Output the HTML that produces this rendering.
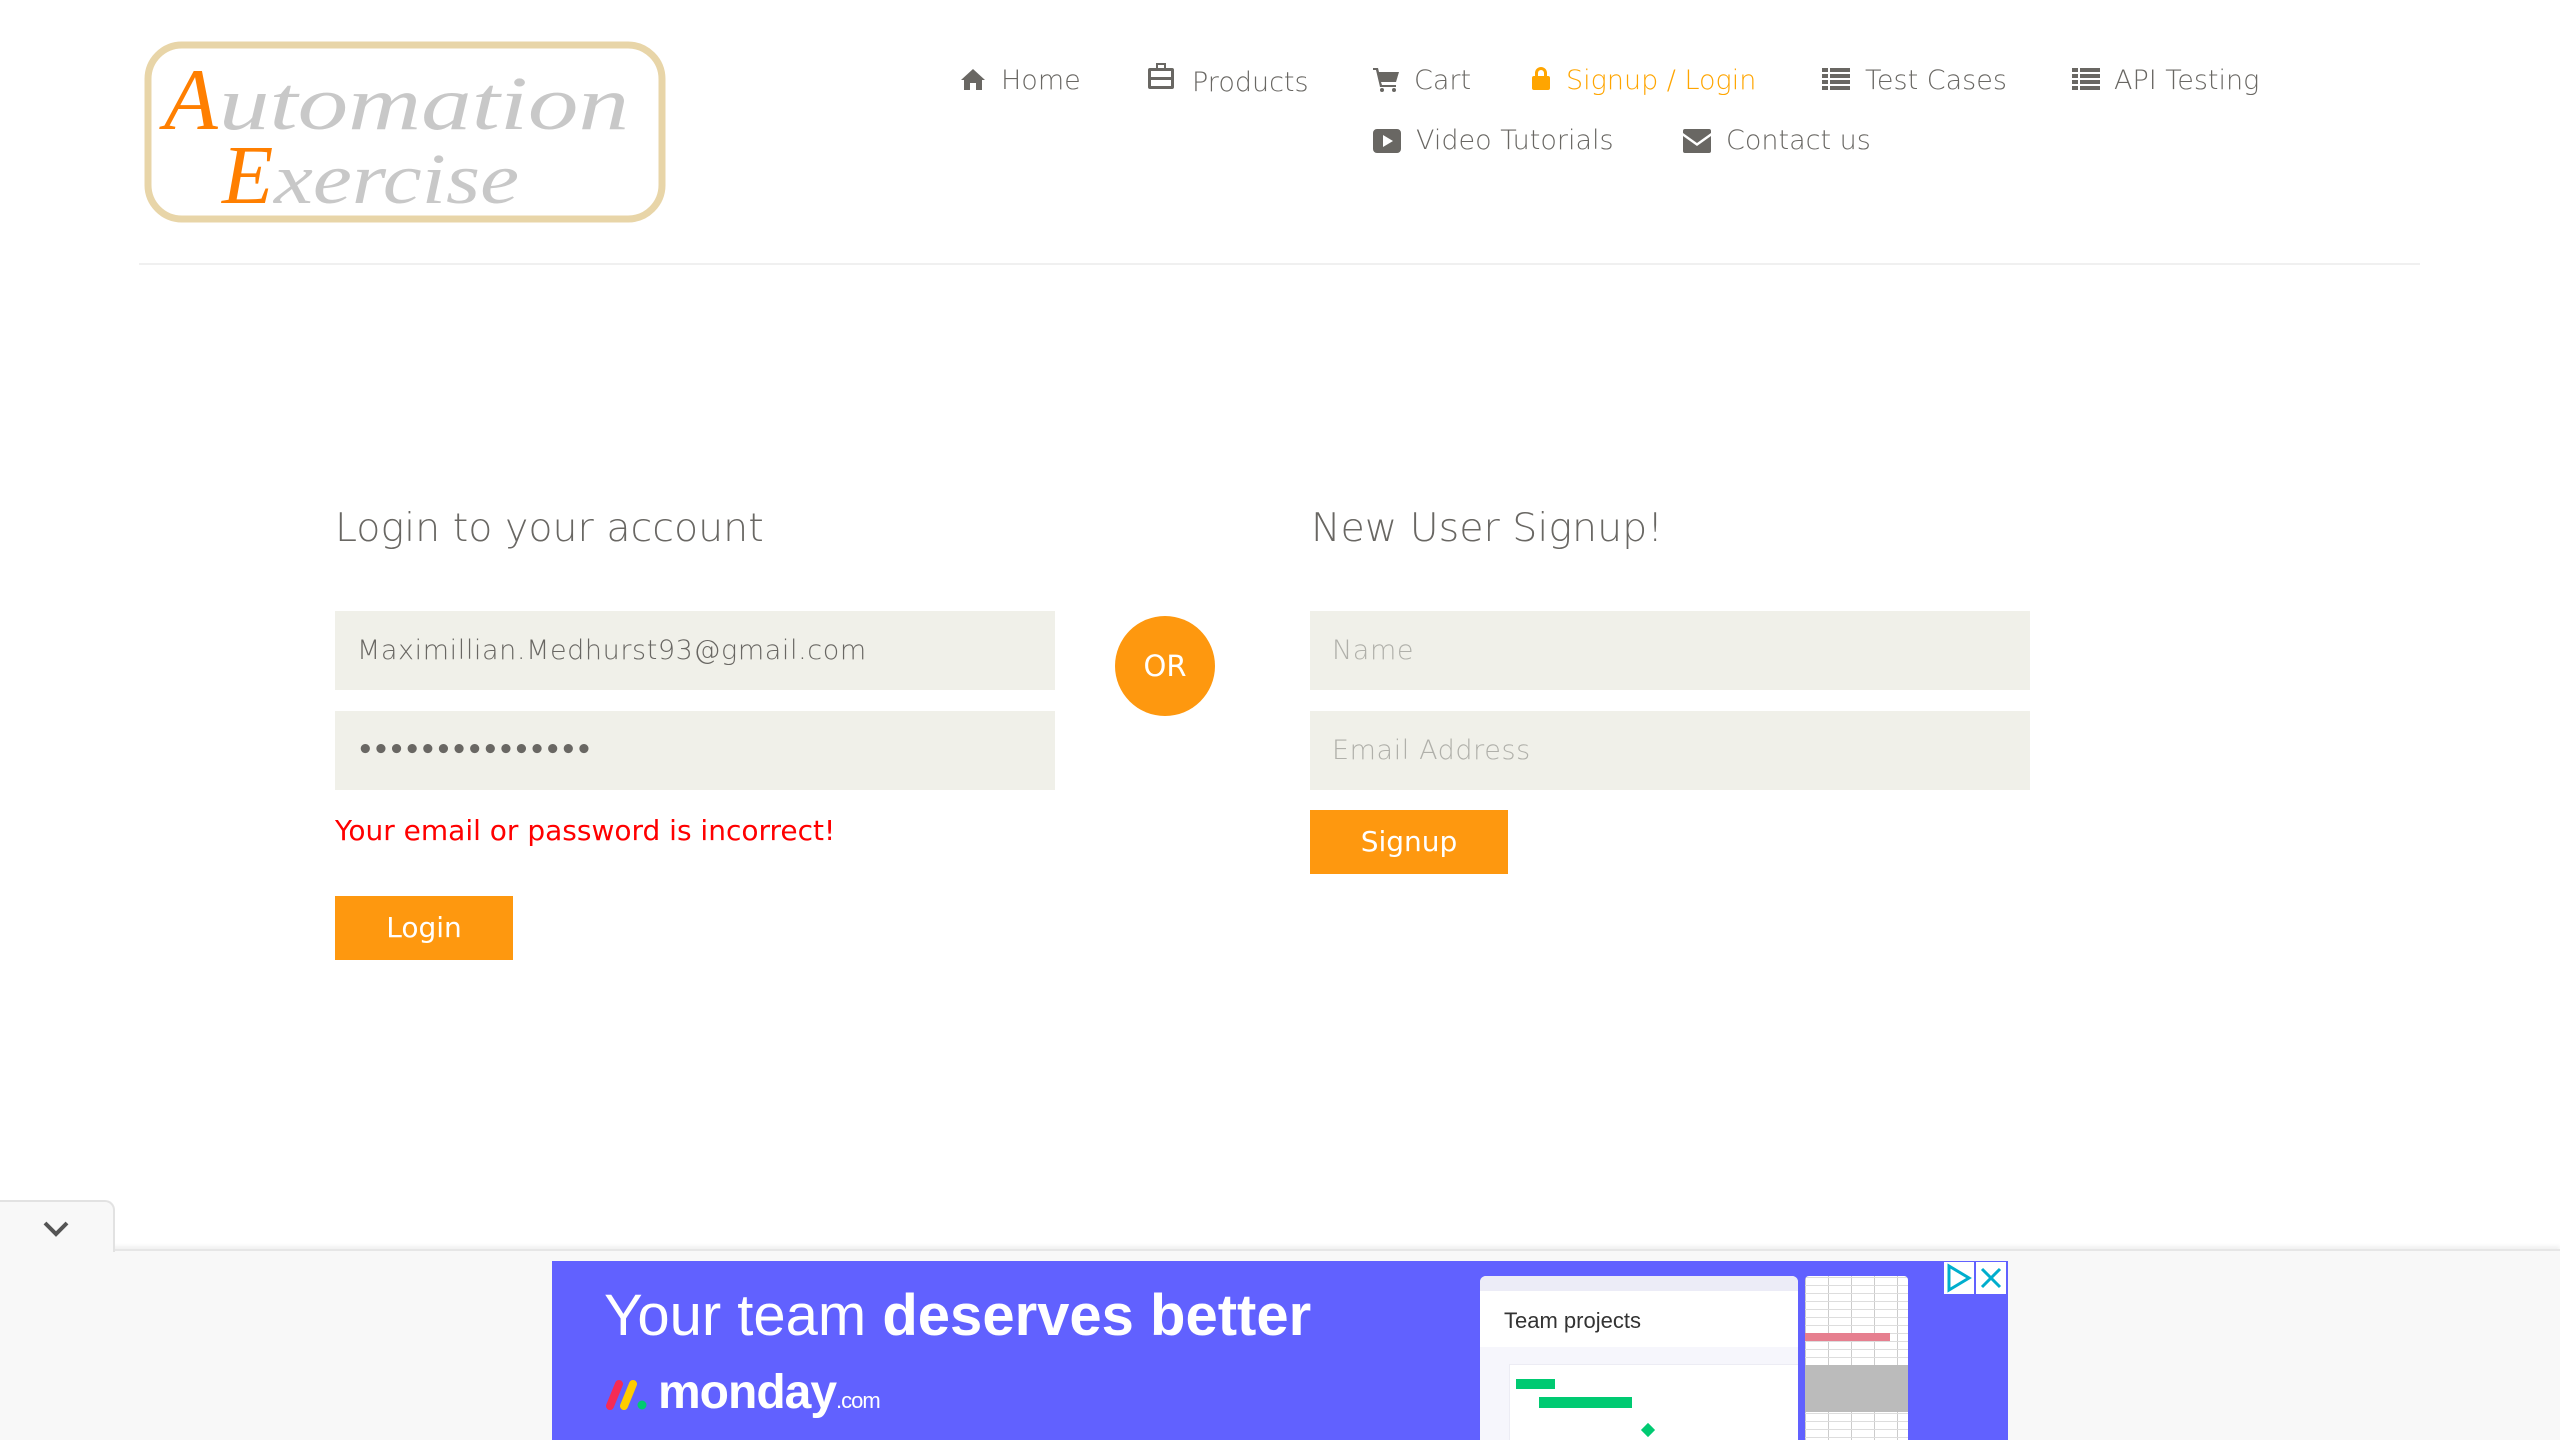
<!DOCTYPE html>
<html><head><meta charset="utf-8">
<style>
*{margin:0;padding:0;box-sizing:border-box}
html,body{width:2560px;height:1440px;overflow:hidden;background:#fff;font-family:"DejaVu Sans","Liberation Sans",sans-serif;color:#696763}
.a{position:absolute;white-space:nowrap}
.nav{font-size:27px;font-weight:200;color:#696763;line-height:1}
.ic{position:absolute;fill:#696763}
h2{position:absolute;font-size:39.5px;font-weight:200;color:#696763;line-height:1}
.inp{position:absolute;background:#F0F0E9;height:79px;width:720px;font-size:27px;font-weight:200;line-height:79px;padding-left:22px;letter-spacing:.6px}
.btn{position:absolute;background:#FE980F;color:#fff;font-size:28px;text-align:center;font-weight:400}
</style></head><body>

<svg class="a" style="left:144px;top:41px" width="522" height="182" viewBox="0 0 522 182">
<rect x="4" y="4" width="514" height="174" rx="34" fill="#fff" stroke="#E8D5A8" stroke-width="7"/>
<text x="20" y="88" font-family="Liberation Serif,serif" font-style="italic" font-size="88" fill="#FF7F00">A</text>
<text x="75" y="88" font-family="Liberation Serif,serif" font-style="italic" font-size="76" fill="#C8C8C8" textLength="410" lengthAdjust="spacingAndGlyphs">utomation</text>
<text x="78" y="162" font-family="Liberation Serif,serif" font-style="italic" font-size="84" fill="#FF7F00">E</text>
<text x="130" y="162" font-family="Liberation Serif,serif" font-style="italic" font-size="72" fill="#C8C8C8" textLength="245" lengthAdjust="spacingAndGlyphs">xercise</text>
</svg>

<svg class="ic" style="left:960px;top:68px" width="26" height="22" viewBox="0 0 26 22"><path d="M13 1 L1 12 L4 12 L4 22 L10 22 L10 15 L16 15 L16 22 L22 22 L22 12 L25 12 Z"/></svg>
<div class="a nav" style="left:1001px;top:67px">Home</div>
<svg class="ic" style="left:1148px;top:62px" width="26" height="28" viewBox="0 0 26 28"><path d="M8 1h10v5h6a2 2 0 0 1 2 2v17a2 2 0 0 1-2 2H2a2 2 0 0 1-2-2V8a2 2 0 0 1 2-2h6zM10 3v3h6V3zM3 9v6h20V9zM3 18v6h20v-6z"/></svg>
<div class="a nav" style="left:1192px;top:69px">Products</div>
<svg class="ic" style="left:1373px;top:68px" width="26" height="24" viewBox="0 0 26 24"><path d="M0 0h5l1 4h20l-3 10H8l1 3h14v2H7L3 2H0z"/><circle cx="9" cy="22" r="2"/><circle cx="21" cy="22" r="2"/></svg>
<div class="a nav" style="left:1414px;top:67px">Cart</div>
<svg class="ic" style="left:1532px;top:66px;fill:#FFA500" width="18" height="24" viewBox="0 0 18 24"><path d="M3 10V7a6 6 0 0 1 12 0v3h-3V7a3 3 0 0 0-6 0v3z"/><rect x="0" y="10" width="18" height="14" rx="2"/></svg>
<div class="a nav" style="left:1566px;top:67px;color:#FFA500">Signup / Login</div>
<svg class="ic" style="left:1822px;top:68px" width="28" height="22" viewBox="0 0 28 22"><path d="M0 0h6v4H0zM8 0h20v4H8zM0 6h6v4H0zM8 6h20v4H8zM0 12h6v4H0zM8 12h20v4H8zM0 18h6v4H0zM8 18h20v4H8z"/></svg>
<div class="a nav" style="left:1865px;top:67px">Test Cases</div>
<svg class="ic" style="left:2072px;top:68px" width="28" height="22" viewBox="0 0 28 22"><path d="M0 0h6v4H0zM8 0h20v4H8zM0 6h6v4H0zM8 6h20v4H8zM0 12h6v4H0zM8 12h20v4H8zM0 18h6v4H0zM8 18h20v4H8z"/></svg>
<div class="a nav" style="left:2114px;top:67px">API Testing</div>
<svg class="ic" style="left:1373px;top:129px" width="28" height="24" viewBox="0 0 28 24"><path d="M4 0h20a4 4 0 0 1 4 4v16a4 4 0 0 1-4 4H4a4 4 0 0 1-4-4V4a4 4 0 0 1 4-4zM10 6v12l10-6z" fill-rule="evenodd"/></svg>
<div class="a nav" style="left:1416px;top:127px">Video Tutorials</div>
<svg class="ic" style="left:1683px;top:129px" width="28" height="24" viewBox="0 0 28 24"><path d="M2 0h24a2 2 0 0 1 2 2v2L14 14 0 4V2a2 2 0 0 1 2-2zM0 7l14 10 14-10v15a2 2 0 0 1-2 2H2a2 2 0 0 1-2-2z"/></svg>
<div class="a nav" style="left:1726px;top:127px">Contact us</div>

<div class="a" style="left:139px;top:263px;width:2281px;height:2px;background:#f0f0f0"></div>

<h2 style="left:335px;top:509px">Login to your account</h2>
<div class="inp" style="left:335px;top:611px">Maximillian.Medhurst93@gmail.com</div>
<div class="inp" style="left:335px;top:711px;font-size:26px;letter-spacing:-1px;font-weight:700;line-height:79px">•••••••••••••••</div>
<div class="a" style="left:335px;top:814px;font-size:28px;color:#f00;font-weight:400">Your email or password is incorrect!</div>
<div class="btn" style="left:335px;top:896px;width:178px;height:64px;line-height:64px">Login</div>

<div class="a" style="left:1115px;top:616px;width:100px;height:100px;border-radius:50%;background:#FE980F;color:#fff;font-size:29px;text-align:center;line-height:100px">OR</div>

<h2 style="left:1311px;top:509px">New User Signup!</h2>
<div class="inp" style="left:1310px;top:611px;color:#b0b0aa">Name</div>
<div class="inp" style="left:1310px;top:711px;color:#b0b0aa">Email Address</div>
<div class="btn" style="left:1310px;top:810px;width:198px;height:64px;line-height:64px">Signup</div>

<div class="a" style="left:0;top:1249px;width:2560px;height:191px;background:#f8f8f8;border-top:2px solid #e6e6e6;box-shadow:0 -3px 4px rgba(0,0,0,.06)"></div>
<div class="a" style="left:0;top:1200px;width:115px;height:52px;background:#f8f8f8;border:2px solid #e2e2e2;border-bottom:none;border-left:none;border-radius:0 10px 0 0"></div>
<svg class="a" style="left:42px;top:1220px" width="28" height="18" viewBox="0 0 28 18"><path d="M3 3l11 11L25 3" stroke="#555" stroke-width="4" fill="none"/></svg>

<div class="a" style="left:552px;top:1261px;width:1456px;height:179px;background:#6161FF;overflow:hidden">
 <div class="a" style="left:52px;top:21px;font-family:'Liberation Sans',sans-serif;font-size:58px;color:#fff">Your team <b>deserves better</b></div>
 <svg class="a" style="left:54px;top:117px" width="48" height="32" viewBox="0 0 48 32"><path d="M4 28L13 6" stroke="#F62B54" stroke-width="8" stroke-linecap="round"/><path d="M18 28L27 6" stroke="#FFCC00" stroke-width="8" stroke-linecap="round"/><circle cx="36" cy="27" r="4.5" fill="#00CA72"/></svg>
 <div class="a" style="left:106px;top:104px;font-family:'Liberation Sans',sans-serif;font-weight:bold;font-size:48px;color:#fff;letter-spacing:-1px">monday<span style="font-size:22px;font-weight:normal">.com</span></div>
 <div class="a" style="left:928px;top:15px;width:318px;height:170px;background:#fff;border-radius:6px 6px 0 0;overflow:hidden">
  <div class="a" style="left:0;top:0;width:318px;height:15px;background:#ececf7"></div>
  <div class="a" style="left:24px;top:32px;font-family:'Liberation Sans',sans-serif;font-size:22px;color:#333">Team projects</div>
  <div class="a" style="left:0;top:71px;width:318px;height:100px;background:#f6f6fc"></div>
  <div class="a" style="left:29px;top:88px;width:290px;height:90px;background:#fff;border:1px solid #ececf4"></div>
  <div class="a" style="left:36px;top:103px;width:39px;height:10px;background:#00CA72"></div>
  <div class="a" style="left:59px;top:121px;width:93px;height:11px;background:#00CA72"></div>
  <div class="a" style="left:163px;top:149px;width:10px;height:10px;background:#00CA72;transform:rotate(45deg)"></div>
  <div class="a" style="left:105px;top:164px;width:85px;height:11px;background:#FFCB00"></div>
 </div>
 <div class="a" style="left:1253px;top:15px;width:103px;height:170px;background:#fff;border-radius:4px 4px 0 0;background-image:repeating-linear-gradient(0deg,#ddd 0 1px,transparent 1px 8px),repeating-linear-gradient(90deg,#ccc 0 1px,transparent 1px 23px)">
  <div class="a" style="left:0;top:57px;width:85px;height:8px;background:#E67F8F"></div>
  <div class="a" style="left:0;top:89px;width:103px;height:47px;background:#bbb"></div>
  <div class="a" style="left:0;top:164px;width:40px;height:8px;background:#999"></div>
 </div>
 <div class="a" style="left:1392px;top:1px;width:30px;height:32px;background:#fff"><svg width="30" height="32" viewBox="0 0 30 32"><path d="M5 4v24l20-12z" stroke="#00AECD" stroke-width="3" fill="none"/></svg></div>
 <div class="a" style="left:1424px;top:1px;width:30px;height:32px;background:#fff"><svg width="30" height="32" viewBox="0 0 30 32"><path d="M6 7l18 18M24 7L6 25" stroke="#00AECD" stroke-width="3"/></svg></div>
</div>
</body></html>
